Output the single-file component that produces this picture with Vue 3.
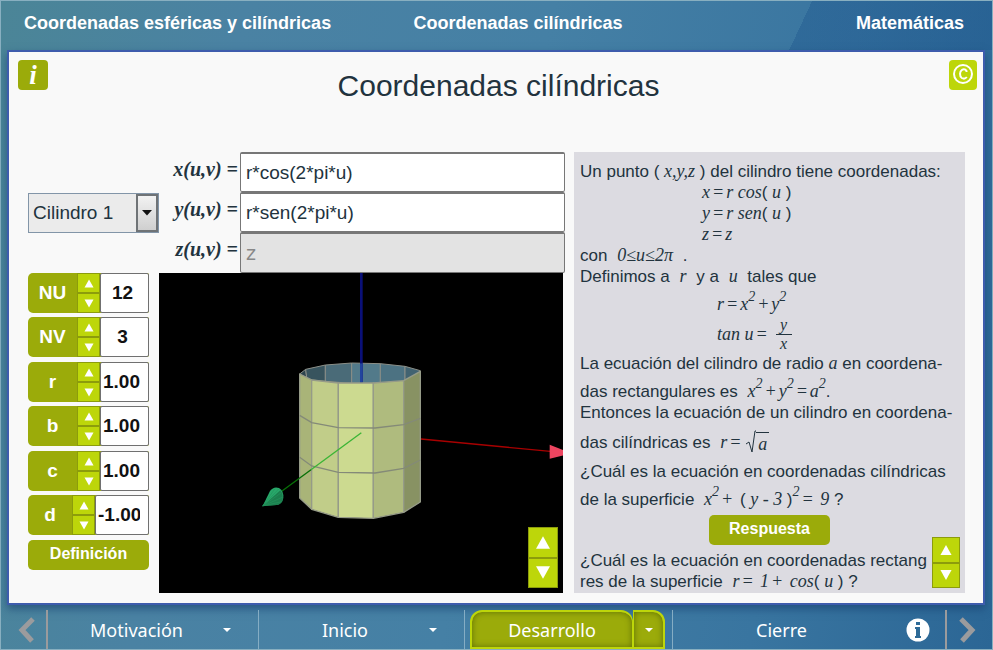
<script setup>
import { ref } from 'vue'

const surface = ref('Cilindro 1')
const formulas = ref([
  { id: 'fx', name: 'x(u,v) =', value: 'r*cos(2*pi*u)', disabled: false },
  { id: 'fy', name: 'y(u,v) =', value: 'r*sen(2*pi*u)', disabled: false },
  { id: 'fz', name: 'z(u,v) =', value: 'z', disabled: true }
])
const groups = ref([
  [
    { name: 'NU', value: '12', step: 1, digits: 0 },
    { name: 'NV', value: '3', step: 1, digits: 0 }
  ],
  [
    { name: 'r', value: '1.00', step: 0.1, digits: 2 },
    { name: 'b', value: '1.00', step: 0.1, digits: 2 }
  ],
  [
    { name: 'c', value: '1.00', step: 0.1, digits: 2 },
    { name: 'd', value: '-1.00', step: 0.1, digits: 2 }
  ]
])
function change(p, dir) {
  p.value = (Number(p.value) + dir * p.step).toFixed(p.digits)
}
</script>

<template>
  <div class="page">
    <header class="top">
      <span>Coordenadas esféricas y cilíndricas</span>
      <span>Coordenadas cilíndricas</span>
      <span>Matemáticas</span>
    </header>

    <main class="sheet">
      <div class="title-row">
        <button class="badge info" type="button" aria-label="Información">i</button>
        <h1>Coordenadas cilíndricas</h1>
        <button class="badge copy" type="button" aria-label="Créditos">
          <svg viewBox="0 0 28 30" width="28" height="30">
            <circle cx="14" cy="14" r="9" fill="none" stroke="#fff" stroke-width="2" />
            <path d="M17.5 10.5V12M17.5 10.8C16.5 9.4 14.6 9 13 9.8C10.4 11.2 10.4 16.4 12.8 18C14.4 18.9 16.6 18.5 17.8 17" fill="none" stroke="#fff" stroke-width="2" />
          </svg>
        </button>
      </div>

      <div class="work">
        <section class="lab">
          <div class="definition">
            <div class="picker">
              <select v-model="surface" aria-label="Superficie">
                <option>Cilindro 1</option>
              </select>
              <span class="picker-arrow"><svg viewBox="0 0 10 6" width="10" height="6"><path d="M0 0H10L5 5.500Z" fill="#111" /></svg></span>
            </div>
            <div class="formulas">
              <div v-for="f in formulas" :key="f.id" class="formula">
                <label :for="f.id">{{ f.name }}</label>
                <input :id="f.id" v-model="f.value" type="text" :disabled="f.disabled" />
              </div>
            </div>
          </div>

          <div class="stage">
            <div class="controls">
              <div v-for="(g, gi) in groups" :key="gi" class="group">
                <div v-for="p in g" :key="p.name" class="param" :class="{ wide: p.value.length > 4, whole: p.digits === 0 }">
                  <label :for="'p-' + p.name">{{ p.name }}</label>
                  <div class="spin">
                    <button type="button" :aria-label="'Aumentar ' + p.name" @click="change(p, 1)"><svg viewBox="0 0 10 9"><path d="M5 0.500L9.500 8.500H0.500Z" /></svg></button>
                    <button type="button" :aria-label="'Disminuir ' + p.name" @click="change(p, -1)"><svg viewBox="0 0 10 9"><path d="M0.500 0.500H9.500L5 8.500Z" /></svg></button>
                  </div>
                  <input :id="'p-' + p.name" v-model="p.value" type="text" />
                </div>
              </div>
              <button class="action" type="button">Definición</button>
            </div>

            <div class="scene">
              <svg class="plot" viewBox="-288 9 1212 960" preserveAspectRatio="xMidYMid slice">
                <g stroke="#8b8f88" stroke-width="3" stroke-linejoin="round">
                  <path d="M134 312L152 298L155 322Z" fill="#2d444d" />
                  <path d="M152 298L211 285V334L172 330L155 322Z" fill="#38545e" />
                  <path d="M211 285L290 279V340L211 334Z" fill="#4a6b78" />
                  <path d="M290 279L376 281V340H290Z" fill="#527a8a" />
                  <path d="M376 281L450 289V334L376 340Z" fill="#4c7282" />
                  <path d="M450 289L496 302V306L450 332Z" fill="#426371" />
                </g>
                <path d="M319 9V338" stroke="#0a1078" stroke-width="8" />
                <path d="M319 280V338" stroke="#22459e" stroke-width="8" />
                <g stroke="#969b88" stroke-width="4" stroke-linejoin="round">
                  <path d="M134 312L170 330V718L134 684Z" fill="#a9b478" />
                  <path d="M170 330L250 339V742L170 718Z" fill="#c1cd89" />
                  <path d="M250 339H355V745L250 742Z" fill="#ccda90" />
                  <path d="M355 339L446 332V727L355 745Z" fill="#afbb7e" />
                  <path d="M446 332L496 304V696L446 727Z" fill="#889263" />
                </g>
                <g fill="none" stroke="#848a78" stroke-width="4">
                  <path d="M134 436L170 458L250 473L360 474L446 464L496 445" />
                  <path d="M134 562L170 588L250 607L360 609L446 595L496 570" />
                </g>
                <path d="M498 507L886 544" stroke="#a80000" stroke-width="4" />
                <path d="M884 524L926 541V556L884 566Z" fill="#ed4560" />
                <path d="M319 488L168 599" stroke="#3bb535" stroke-width="4" />
                <path d="M168 599L80 664" stroke="#077007" stroke-width="4" />
                <path d="M23 708L45 663Q56 648 72 654Q87 664 85 684Q81 703 65 705Z" fill="#28a86a" />
                <path d="M23 708L76 661Q87 674 82 694Q75 705 65 705Z" fill="#1c7f4e" />
                <path d="M23 708L60 656M23 708L71 657M23 708L79 668M23 708L84 681M23 708L80 695" stroke="#23935c" stroke-width="2" />
              </svg>
              <div class="spin float big">
                <button type="button" aria-label="Acercar"><svg viewBox="0 0 10 9"><path d="M5 0L10 9H0Z" /></svg></button>
                <button type="button" aria-label="Alejar"><svg viewBox="0 0 10 9"><path d="M0 0H10L5 9Z" /></svg></button>
              </div>
            </div>
          </div>
        </section>

        <section class="theory">
          <p>Un punto ( <i>x,y,z</i> ) del cilindro tiene coordenadas:</p>
          <p class="eq"><i>x<b>=</b>r cos</i>( <i>u</i> )</p>
          <p class="eq"><i>y<b>=</b>r sen</i>( <i>u</i> )</p>
          <p class="eq"><i>z<b>=</b>z</i></p>
          <p>con <i class="gap">0≤u≤2π</i> .</p>
          <p>Definimos a <i class="gap">r</i> y a <i class="gap">u</i> tales que</p>
          <p class="eq in tall"><i>r<b>=</b>x<sup>2</sup><b>+</b>y<sup>2</sup></i></p>
          <p class="eq in taller"><i>tan u<b>=</b></i><span class="frac"><i>y</i><i>x</i></span></p>
          <p>La ecuación del cilindro de radio <i>a</i> en coordena-</p>
          <p class="tall">das rectangulares es <i class="lead">x<sup>2</sup><b>+</b>y<sup>2</sup><b>=</b>a<sup>2</sup></i>.</p>
          <p>Entonces la ecuación de un cilindro en coordena-</p>
          <p class="taller"><span>das cilíndricas es <i class="lead">r<b>=</b></i></span><svg class="root" viewBox="0 0 10 24" width="10" height="24"><path d="M0 14L3 12L6 22L9 1H10" /></svg><i class="radicand">a</i></p>
          <p>¿Cuál es la ecuación en coordenadas cilíndricas</p>
          <p class="tall">de la superficie <i class="lead">x<sup>2</sup><b>+</b></i> ( <i>y - 3 </i> )<i><sup>2</sup><b>=</b> 9</i> ?</p>
          <button class="action answer" type="button">Respuesta</button>
          <p>¿Cuál es la ecuación en coordenadas rectang</p>
          <p>res de la superficie <i class="lead">r<b>=</b> 1<b>+</b> cos</i>( <i>u</i> ) ?</p>
          <div class="spin float">
            <button type="button" aria-label="Subir"><svg viewBox="0 0 10 9"><path d="M5 0L10 9H0Z" /></svg></button>
            <button type="button" aria-label="Bajar"><svg viewBox="0 0 10 9"><path d="M0 0H10L5 9Z" /></svg></button>
          </div>
        </section>
      </div>
    </main>

    <nav class="bottom">
      <button class="step" type="button" aria-label="Anterior"><svg viewBox="0 0 18 26" width="18" height="26"><path d="M15 2L4 13L14 24" /></svg></button>
      <div class="tab first"><a href="#motivacion">Motivación</a><button class="caret" type="button" aria-label="Abrir Motivación"><svg viewBox="0 0 8 4" width="8" height="4"><path d="M0 0H8L4 4Z" /></svg></button></div>
      <div class="tab second"><a href="#inicio">Inicio</a><button class="caret" type="button" aria-label="Abrir Inicio"><svg viewBox="0 0 8 4" width="8" height="4"><path d="M0 0H8L4 4Z" /></svg></button></div>
      <div class="tab active"><a href="#desarrollo">Desarrollo</a><button class="caret" type="button" aria-label="Abrir Desarrollo"><svg viewBox="0 0 8 4" width="8" height="4"><path d="M0 0H8L4 4Z" /></svg></button></div>
      <div class="tab last"><a href="#cierre">Cierre</a><button class="caret" type="button" aria-label="Ayuda"><svg viewBox="0 0 24 24" width="24" height="24"><circle cx="12" cy="12" r="11.500" /><path class="mark" d="M10 4H14V7H10ZM9 9H14V18H15V20H9V18H10V11H9Z" /></svg></button></div>
      <button class="step" type="button" aria-label="Siguiente"><svg viewBox="0 0 18 26" width="18" height="26"><path d="M3 2L14 13L4 24" /></svg></button>
    </nav>
  </div>
</template>

<style>
body { margin: 0; }
</style>

<style scoped>
* { box-sizing: border-box; }
button, input, select { font: inherit; margin: 0; }
button { border: 0; padding: 0; cursor: pointer; }
.page {
  min-height: 100vh;
  display: flex;
  flex-direction: column;
  border: 1px solid #88afc0;
  font-family: "Liberation Sans", Arial, sans-serif;
  color: #22333e;
  background: linear-gradient(100deg, #4b8597 0%, #4a82a3 22%, #4580a5 50%, #3975a0 78%, #2b6695 100%);
}
.top {
  height: 49px;
  padding: 0 28px 5px 23px;
  display: grid;
  grid-template-columns: 390fr auto 342fr;
  align-items: center;
  font-size: 18px;
  font-weight: bold;
  color: #fff;
  background: linear-gradient(115deg, transparent 80%, rgba(20, 75, 135, 0.3) 80%);
}
.top span:last-child { text-align: right; }
.sheet {
  flex: 1;
  margin: 0 7px 0 6px;
  padding: 8px 18px 10px 19px;
  border: 2px solid #3e5cad;
  background: #f9f9f9;
  box-shadow: 0 4px 8px rgba(22, 62, 110, 0.6);
}
.title-row {
  display: flex;
  justify-content: space-between;
  align-items: flex-start;
  height: 92px;
  margin: 0 -12px 0 -10px;
}
h1 {
  margin: 8px 0 0;
  font-size: 30px;
  line-height: 36px;
  font-weight: normal;
}
.badge { height: 30px; border-radius: 4px; color: #fff; }
.info {
  width: 30px;
  background: #9bab0a;
  font: italic bold 27px/28px "Liberation Serif", serif;
}
.copy { width: 28px; background: #bdd60a; }
.work {
  display: grid;
  grid-template-columns: 537fr 391fr;
  gap: 9px;
}
.lab { display: flex; flex-direction: column; }
.definition { display: flex; align-items: center; }
.picker {
  width: 131px;
  height: 40px;
  display: grid;
  grid-template-columns: 1fr 22px;
  border: 1px solid #8295a8;
  background: #ebebeb;
}
.picker select {
  grid-area: 1 / 1 / 2 / 3;
  appearance: none;
  border: 0;
  padding: 0 4px;
  background: none;
  color: #22333e;
  font-size: 19px;
}
.picker-arrow {
  grid-area: 1 / 2;
  display: grid;
  place-items: center;
  border: 2px solid #6f7376;
  background: linear-gradient(#f2f2f2, #cfcfcf);
  pointer-events: none;
}
.formulas { flex: 1; }
.formula { display: flex; height: 40px; }
.formula:last-child { height: 41px; }
.formula label {
  width: 81px;
  padding: 5px 2px 0 0;
  text-align: right;
  font: italic bold 20px/24px "Liberation Serif", serif;
}
.formula input {
  flex: 1;
  min-width: 0;
  padding: 0 5px;
  border: 1px solid #777;
  border-top-width: 2px;
  border-radius: 2px;
  background: #fff;
  color: #22333e;
  font-size: 19px;
}
.formula input:disabled {
  background: #e3e3e3;
  color: #888;
  font-family: "DejaVu Sans", sans-serif;
}
.stage { flex: 1; display: flex; gap: 10px; }
.controls { width: 121px; display: flex; flex-direction: column; gap: 5px; }
.group { display: flex; flex-direction: column; gap: 4px; }
.param {
  display: grid;
  grid-template-columns: 49px 23px 1fr;
  height: 40px;
  border-radius: 5px 2px 2px 5px;
  background: #9bab0a;
  font-size: 19px;
  font-weight: bold;
}
.param.wide { grid-template-columns: 44px 23px 1fr; }
.param label { align-self: center; text-align: center; color: #fff; }
.param input {
  width: 100%;
  min-width: 0;
  padding: 0 8px 0 2px;
  border: 1px solid #707070;
  border-radius: 2px;
  background: #fff;
  color: #111;
  font-weight: bold;
  text-align: right;
}
.param.whole input { padding: 0 4px 0 0; text-align: center; }
.spin {
  display: grid;
  grid-template-rows: 1fr 1fr;
  gap: 2px;
  padding: 1px;
  background: #8c9c0c;
}
.spin button { display: grid; place-items: center; background: #bdd60a; }
.spin svg { width: 10px; height: 9px; fill: #fff; }
.float {
  position: absolute;
  right: 5px;
  bottom: 5px;
  width: 28px;
  height: 51px;
}
.float svg { width: 12px; height: 10px; }
.float.big { width: 30px; height: 61px; }
.float.big svg { width: 14px; height: 13px; }
.action {
  height: 30px;
  padding-bottom: 3px;
  border-radius: 5px;
  background: #9bab0a;
  color: #fff;
  font-size: 16px;
  font-weight: bold;
}
.scene {
  position: relative;
  flex: 1;
  margin-right: 2px;
  background: #000;
  overflow: hidden;
}
.plot { display: block; width: 100%; height: 100%; }
.theory {
  position: relative;
  display: flex;
  flex-direction: column;
  padding: 9px 6px 1px;
  background: #dcdbe1;
  font-size: 17px;
  line-height: 21px;
  white-space: nowrap;
}
p { margin: 0; height: 21px; }
p i { font: italic 18px/18px "Liberation Serif", serif; }
p b { margin: 0 2px; font-weight: normal; }
.gap { margin: 0 5px; }
.lead { margin-left: 5px; }
.eq { padding-left: 122px; }
.in { padding-left: 137px; }
.tall { height: 28px; padding-top: 7px; }
.taller { height: 38px; display: flex; align-items: center; }
sup { font-size: 14px; line-height: 0; vertical-align: 9px; }
.frac {
  display: grid;
  margin-left: 6px;
  text-align: center;
  width: 16px;
}
.frac i { font-size: 16px; }
.frac i:first-child { border-bottom: 1px solid #22333e; }
.root { margin-left: 3px; fill: none; stroke: #22333e; stroke-width: 1; }
.radicand { border-top: 1px solid #22333e; padding: 2px 2px 0; }
.answer { width: 121px; margin: 5px auto; }
.bottom {
  height: 44px;
  padding-top: 5px;
  display: grid;
  grid-template-columns: 45px 212fr 206fr 208fr 275fr 45px;
  font-family: "Noto Sans", sans-serif;
  font-size: 18px;
}
.step { padding: 0 0 0 6px; background: none; }
.step:last-child { padding: 0 6px 0 0; }
.step svg { fill: none; stroke: #9b9b9d; stroke-width: 5; vertical-align: middle; }
.tab { display: flex; border-left: 1px solid #85adc4; }
.tab a {
  flex: 1;
  display: grid;
  place-items: center;
  color: #fff;
  text-decoration: none;
}
.first { padding-left: 30px; border-left: 2px solid #9b9b9d; }
.second { padding-left: 30px; }
.active { padding: 0 7px 0 5px; }
.last { border-right: 2px solid #9b9b9d; }
.caret {
  width: 63px;
  display: grid;
  place-items: center;
  background: none;
}
.caret svg { fill: #fff; }
.last .caret { width: 55px; }
.mark { fill: #2d6a97; }
.active a, .active .caret {
  border: 2px solid #bdd60a;
  background: #9bab0a;
  box-shadow: inset 0 0 6px rgba(70, 85, 0, 0.7);
}
.active a { border-radius: 12px 12px 0 0; border-right-width: 1px; }
.active .caret { width: 32px; border-left-width: 1px; border-radius: 0 12px 0 0; }
</style>
